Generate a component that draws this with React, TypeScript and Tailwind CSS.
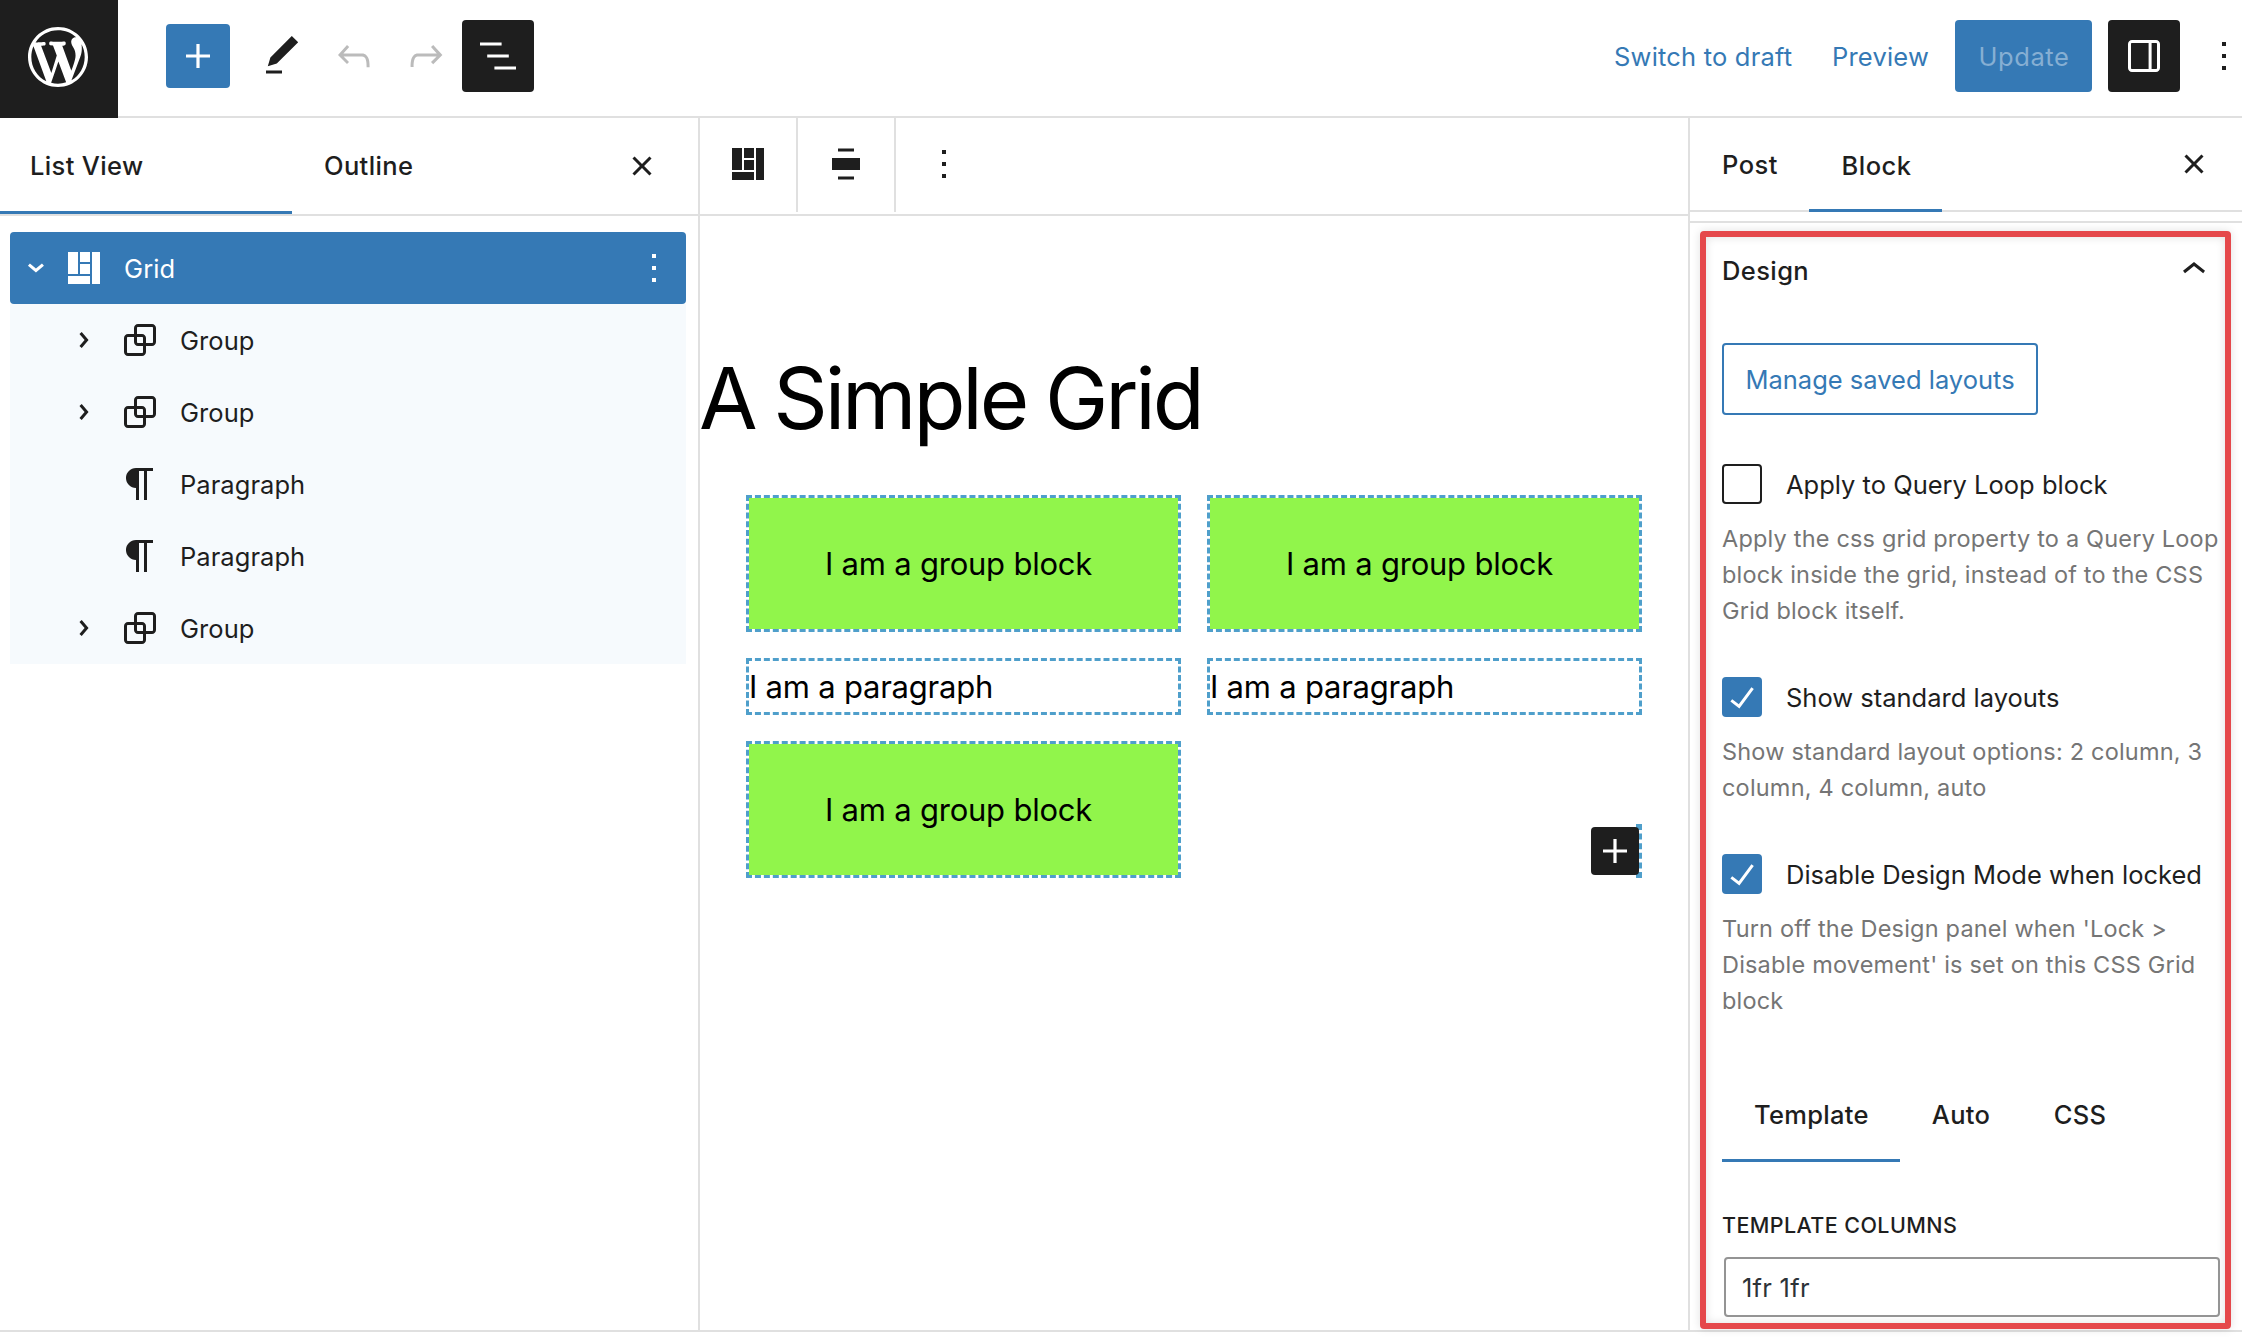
import type { ReactNode } from "react";

const paths = {
  plus: "M18 11.2h-5.2V6h-1.6v5.2H6v1.6h5.2V18h1.6v-5.2H18z",
  edit: "M20.1 5.1L16.9 2 6.2 12.7l-1.3 4.4 4.5-1.3L20.1 5.1zM4 20.8h8v-1.5H4v1.5z",
  undo: "M18.3 11.7c-.6-.6-1.4-.9-2.3-.9H6.7l2.9-3.3-1.1-1-4.5 5L8.5 16l1-1-2.7-2.7H16c.5 0 .9.2 1.3.5 1 1 1 3.4 1 4.5v.3h1.5v-.2c0-1.5 0-4.3-1.5-5.7z",
  redo: "M15.6 6.5l-1.1 1 2.9 3.3H8c-.9 0-1.7.3-2.3.9-1.4 1.5-1.4 4.2-1.4 5.6v.2h1.5v-.3c0-1.1 0-3.5 1-4.5.3-.3.7-.5 1.3-.5h9.2L14.5 15l1.1 1.1 4.6-4.6-4.6-5z",
  listView: "M13.8 5.2H3v1.5h10.8V5.2zm-3.6 12v1.5H21v-1.5H10.2zm7.2-6H6.6v1.5h10.8v-1.5z",
  more: "M13 19h-2v-2h2v2zm0-6h-2v-2h2v2zm0-6h-2V5h2v2z",
  close:
    "M12 13.06l3.712 3.713 1.061-1.06L13.061 12l3.712-3.712-1.06-1.06L12 10.938 8.288 7.227l-1.061 1.06L10.939 12l-3.712 3.712 1.06 1.061L12 13.061z",
  chevron: "M10.8622 8.04053L14.2805 12.0286L10.8622 16.0167L9.72327 15.0405L12.3049 12.0286L9.72327 9.01672L10.8622 8.04053Z",
  chevronUp: "M6.5 12.4L12 8l5.5 4.4-.9 1.2L12 10l-4.5 3.6-1-1.2z",
  grid: "M4 4h5v11H4zM10 4h5v5h-5zM10 10h5v5h-5zM4 16h11v4H4zM16 4h4v16h-4z",
  group:
    "M18 4h-7c-1.1 0-2 .9-2 2v3H6c-1.1 0-2 .9-2 2v7c0 1.1.9 2 2 2h7c1.1 0 2-.9 2-2v-3h3c1.1 0 2-.9 2-2V6c0-1.1-.9-2-2-2zm-4.5 14c0 .3-.2.5-.5.5H6c-.3 0-.5-.2-.5-.5v-7c0-.3.2-.5.5-.5h3V13c0 1.1.9 2 2 2h2.5v3zm0-4.5H11c-.3 0-.5-.2-.5-.5v-2.5H13c.3 0 .5.2.5.5v2.5zm5-.5c0 .3-.2.5-.5.5h-3V11c0-1.1-.9-2-2-2h-2.5V6c0-.3.2-.5.5-.5h7c.3 0 .5.2.5.5v7z",
  paragraph:
    "m9.99609 14v-.2251l.00391.0001v6.225h1.5v-14.5h2.5v14.5h1.5v-14.5h3v-1.5h-8.50391c-2.76142 0-5 2.23858-5 5 0 2.7614 2.23858 5 5 5z",
  align: "M5 9v6h14V9H5zm11-4.8H8v1.5h8V4.2zM8 19.8h8v-1.5H8v1.5z",
  check: "M16.7 7.1l-6.3 8.5-3.3-2.5-.9 1.2 4.5 3.4L17.9 8z",
  sidebar:
    "M18 4H6c-1.1 0-2 .9-2 2v12c0 1.1.9 2 2 2h12c1.1 0 2-.9 2-2V6c0-1.1-.9-2-2-2zM5.5 18V6c0-.3.2-.5.5-.5h8.3v13H6c-.3 0-.5-.2-.5-.5zm13 0c0 .3-.2.5-.5.5h-2.2v-13H18c.3 0 .5.2.5.5v12z",
};

function Icon({ name, className = "" }: { name: keyof typeof paths; className?: string }) {
  return (
    <svg viewBox="0 0 24 24" className={`size-12 shrink-0 fill-current ${className}`}>
      <path d={paths[name]} />
    </svg>
  );
}

function WordPressLogo() {
  return (
    <svg viewBox="-2 -2 24 24" className="size-[72px] fill-white">
      <path d="M20 10c0-5.51-4.49-10-10-10C4.48 0 0 4.49 0 10c0 5.52 4.48 10 10 10 5.51 0 10-4.48 10-10zM7.78 15.37L4.37 6.22c.55-.02 1.17-.08 1.17-.08.5-.06.44-1.13-.06-1.11 0 0-1.45.11-2.37.11-.18 0-.37 0-.58-.01C4.12 2.69 6.87 1.11 10 1.11c2.33 0 4.45.87 6.05 2.34-.68-.11-1.65.39-1.65 1.58 0 .74.45 1.36.9 2.1.35.61.55 1.36.55 2.46 0 1.49-1.4 5-1.4 5l-3.03-8.37c.54-.02.82-.17.82-.17.5-.05.44-1.25-.06-1.22 0 0-1.44.12-2.38.12-.87 0-2.33-.12-2.33-.12-.5-.03-.56 1.2-.06 1.22l.92.08 1.26 3.41zM17.41 10c.24-.64.74-1.87.43-4.25.7 1.29 1.05 2.71 1.05 4.25 0 3.29-1.73 6.24-4.4 7.78.97-2.59 1.94-5.2 2.92-7.78zM6.1 18.09C3.12 16.65 1.11 13.53 1.11 10c0-1.3.23-2.48.72-3.59C3.25 10.3 4.67 14.2 6.1 18.09zm4.03-6.63l2.58 6.98c-.86.29-1.76.45-2.71.45-.79 0-1.57-.11-2.29-.33.81-2.38 1.62-4.74 2.42-7.1z" />
    </svg>
  );
}

function Header() {
  return (
    <header className="flex h-[118px] shrink-0 overflow-hidden">
      <div className="flex w-[118px] shrink-0 items-start bg-[#1e1e1e] pt-[21px] pl-[22px]">
        <WordPressLogo />
      </div>
      <div className="flex min-w-0 flex-1 items-start border-b-2 border-[#e0e0e0] pt-5 pl-12">
        <button className="mt-1 mr-4 flex size-16 items-center justify-center rounded-[4px] bg-[#3579b5] text-white">
          <Icon name="plus" />
        </button>
        <button className="flex size-[72px] items-center justify-center">
          <Icon name="edit" />
        </button>
        <button className="flex size-[72px] items-center justify-center text-[#bbbbbb]">
          <Icon name="undo" />
        </button>
        <button className="flex size-[72px] items-center justify-center text-[#bbbbbb]">
          <Icon name="redo" />
        </button>
        <button className="flex size-[72px] items-center justify-center rounded-[4px] bg-[#1e1e1e] text-white">
          <Icon name="listView" />
        </button>
        <div className="ml-auto flex h-[72px] shrink-0 items-center tracking-[0.2px]">
          <button className="w-[218px] pt-px text-left text-[#3579b5]">Switch to draft</button>
          <button className="w-[123px] pt-px text-left text-[#3579b5]">Preview</button>
          <button className="mr-4 h-[72px] w-[137px] rounded-[4px] bg-[#3579b5] pt-px pl-px tracking-[0.55px] text-[#86afd3]">
            Update
          </button>
          <button className="mr-2 flex size-[72px] items-center justify-center rounded-[4px] bg-[#1e1e1e] text-white">
            <Icon name="sidebar" />
          </button>
          <button className="-mr-[18px] flex size-[72px] items-center justify-center">
            <Icon name="more" />
          </button>
        </div>
      </div>
    </header>
  );
}

function ListRow({ icon, label, expandable }: { icon: "group" | "paragraph"; label: string; expandable: boolean }) {
  return (
    <li className="flex h-[72px] items-center bg-[#f6fafd] pl-[50px]">
      <span className="size-12">{expandable && <Icon name="chevron" />}</span>
      <Icon name={icon} className="ml-2" />
      <span className="ml-4 pt-px tracking-[0.05px]">{label}</span>
    </li>
  );
}

function ListPanel() {
  return (
    <aside className="flex w-[700px] shrink-0 flex-col border-r-2 border-[#e0e0e0]">
      <div className="flex h-[98px] items-stretch border-b-2 border-[#e0e0e0] font-medium tracking-[0.36px]">
        <button className="w-[292px] border-b-[3px] border-[#3579b5] pt-[3px] pl-[30px] text-left">List View</button>
        <button className="w-[292px] border-b-[3px] border-transparent pt-[3px] pl-8 text-left">Outline</button>
        <button className="ml-[34px] flex items-center">
          <Icon name="close" />
        </button>
      </div>
      <ul className="mt-4 ml-[10px] w-[676px]">
        <li className="flex h-[72px] items-center rounded-[4px] bg-[#3579b5] pl-0.5 text-white">
          <Icon name="chevron" className="rotate-90" />
          <Icon name="grid" />
          <span className="ml-4 pt-px tracking-[0.1px]">Grid</span>
          <Icon name="more" className="mr-2 ml-auto" />
        </li>
        <ListRow icon="group" label="Group" expandable />
        <ListRow icon="group" label="Group" expandable />
        <ListRow icon="paragraph" label="Paragraph" expandable={false} />
        <ListRow icon="paragraph" label="Paragraph" expandable={false} />
        <ListRow icon="group" label="Group" expandable />
      </ul>
    </aside>
  );
}

function GroupBlock() {
  return (
    <div className="h-[137px] border-[3px] border-dashed border-[#4f9fcb] bg-[#91f54b] bg-clip-padding pt-[47px] pl-[76px] text-[31px] leading-[38px] tracking-[-0.22px] whitespace-nowrap text-black">
      I am a group block
    </div>
  );
}

function ParagraphBlock() {
  return (
    <div className="h-[57px] border-[3px] border-dashed border-[#4f9fcb] pt-[7px] text-[31px] leading-[38px] tracking-[-0.22px] whitespace-nowrap text-black">
      I am a paragraph
    </div>
  );
}

function Canvas() {
  return (
    <main className="flex min-w-0 flex-1 flex-col">
      <div className="flex h-[98px] shrink-0 border-b-2 border-[#e0e0e0] text-[#1e1e1e]">
        <button className="flex h-[94px] w-[98px] items-center justify-center border-r-2 border-[#e0e0e0]">
          <Icon name="grid" className="-mt-0.5" />
        </button>
        <button className="flex h-[94px] w-[98px] items-center justify-center border-r-2 border-[#e0e0e0]">
          <Icon name="align" className="-mt-0.5" />
        </button>
        <button className="flex h-[94px] w-24 items-center justify-center">
          <Icon name="more" className="-mt-0.5" />
        </button>
      </div>
      <h1 className="mt-[131px] -ml-px h-[104px] text-[85px] leading-[104px] font-normal tracking-[-3.15px] whitespace-nowrap text-black [word-spacing:-2px]">
        A Simple Grid
      </h1>
      <div className="mt-11 ml-[46px] grid w-[896px] grid-cols-[435px_435px] gap-[26px]">
        <GroupBlock />
        <GroupBlock />
        <ParagraphBlock />
        <ParagraphBlock />
        <GroupBlock />
        <div className="relative h-[54px] w-1.5 self-end justify-self-end border-[3px] border-dashed border-[#4f9fcb]">
          <button className="absolute top-0 right-0 flex size-12 items-center justify-center rounded-[4px] bg-[#1e1e1e] text-white">
            <Icon name="plus" />
          </button>
        </div>
      </div>
    </main>
  );
}

function Option({ label, checked, children }: { label: string; checked: boolean; children: ReactNode }) {
  return (
    <div>
      <div className="flex h-10 items-center">
        {checked ? (
          <span className="flex size-10 shrink-0 items-center justify-center rounded-[4px] bg-[#3579b5] text-white">
            <Icon name="check" className="-mt-px" />
          </span>
        ) : (
          <span className="size-10 shrink-0 rounded-[4px] border-2 border-[#1e1e1e]" />
        )}
        <span className="ml-6 pt-px whitespace-nowrap">{label}</span>
      </div>
      <p className="mt-[17px] text-[23.5px] leading-9 tracking-[0.19px] whitespace-nowrap text-[#757575]">{children}</p>
    </div>
  );
}

function SettingsPanel() {
  return (
    <aside className="flex w-[554px] shrink-0 flex-col border-l-2 border-[#e0e0e0]">
      <div className="flex h-[94px] shrink-0 border-b-2 border-[#e0e0e0] font-medium tracking-[0.45px]">
        <button className="w-[119px] pt-px pl-8 text-left">Post</button>
        <button className="-mb-0.5 w-[133px] border-b-[3px] border-[#3579b5] pt-1 pl-0.5">Block</button>
        <button className="mr-6 ml-auto flex items-center">
          <Icon name="close" />
        </button>
      </div>
      <div className="mt-[9px] flex flex-1 flex-col border-t-2 border-[#e0e0e0] pt-2">
        <section className="ml-2.5 h-[1098px] w-[531px] rounded-[4px] border-[6px] border-[#e5484b] pl-4 shadow-[0_0_10px_rgba(0,0,0,0.12),inset_0_0_10px_rgba(0,0,0,0.12)]">
          <div className="flex h-[68px] items-center justify-between pr-[7px]">
            <h2 className="font-medium tracking-[0.4px]">Design</h2>
            <Icon name="chevronUp" className="-mt-0.5" />
          </div>
          <button className="mt-[38px] h-[72px] w-[316px] rounded-[4px] border-2 border-[#3579b5] pt-0.5 text-[#3579b5]">
            Manage saved layouts
          </button>
          <div className="mt-[49px]">
            <Option label="Apply to Query Loop block" checked={false}>
              Apply the css grid property to a Query Loop
              <br />
              block inside the grid, instead of to the CSS
              <br />
              Grid block itself.
            </Option>
          </div>
          <div className="mt-12">
            <Option label="Show standard layouts" checked>
              Show standard layout options: 2 column, 3
              <br />
              column, 4 column, auto
            </Option>
          </div>
          <div className="mt-12">
            <Option label="Disable Design Mode when locked" checked>
              Turn off the Design panel when 'Lock &gt;
              <br />
              Disable movement' is set on this CSS Grid
              <br />
              block
            </Option>
          </div>
          <div className="mt-[49px] flex h-[94px] font-medium tracking-[0.3px]">
            <button className="w-[178px] border-b-[3px] border-[#3579b5] pt-[3px] pl-px">Template</button>
            <button className="w-[122px] text-center">Auto</button>
            <button className="w-[116px] text-center">CSS</button>
          </div>
          <div className="mt-[47px] h-8 text-[21.5px] leading-8 font-medium tracking-[0.4px]">TEMPLATE COLUMNS</div>
          <div className="mt-4 ml-0.5 flex h-[60px] w-[496px] items-center rounded-[4px] border-2 border-[#949494] pt-0.5 pl-4 tracking-[0.25px] text-[#2c3338]">
            1fr 1fr
          </div>
        </section>
      </div>
    </aside>
  );
}

export default function App() {
  return (
    <div className="flex h-[1338px] w-[2242px] flex-col overflow-hidden bg-white pb-1.5 font-['Inter',sans-serif] text-[25.5px] leading-8 text-[#1e1e1e]">
      <Header />
      <div className="flex min-h-0 flex-1 border-b-2 border-[#e0e0e0]">
        <ListPanel />
        <Canvas />
        <SettingsPanel />
      </div>
    </div>
  );
}
